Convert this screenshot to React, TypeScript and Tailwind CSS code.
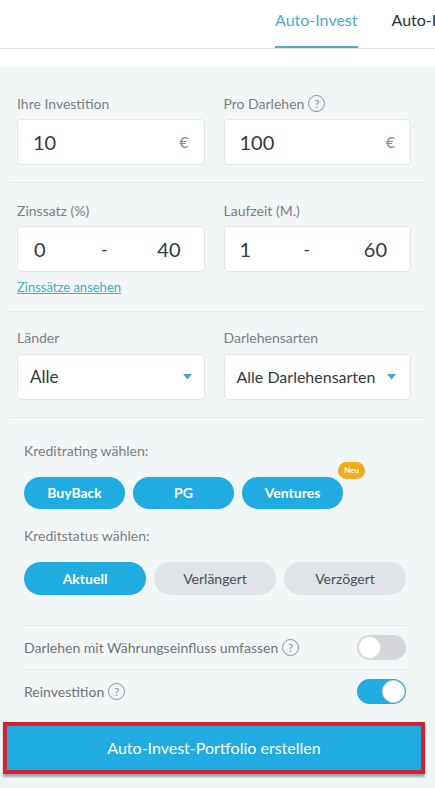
import React from "react";

const font = { fontFamily: "Lato, 'Open Sans', sans-serif" };

const Help = () => (
  <span className="ml-1 inline-flex h-[17px] w-[17px] items-center justify-center rounded-full border border-[#8a8f94] text-[11px] leading-none text-[#8a8f94]">
    ?
  </span>
);

const Caret = () => (
  <svg width="9" height="6" viewBox="0 0 9 6" className="shrink-0">
    <path d="M0 0 H9 L4.5 5.5 Z" fill="#3fa9c6" />
  </svg>
);

const Toggle = ({ on }: { on: boolean }) => (
  <div
    className={`flex h-[25px] w-[49px] items-center rounded-full p-[1px] ${
      on ? "justify-end bg-[#20ace0]" : "justify-start bg-[#d3d5d8]"
    }`}
  >
    <div className="h-[23px] w-[23px] rounded-full border border-[#d8dde0] bg-white" />
  </div>
);

const Box = ({ children }: { children: React.ReactNode }) => (
  <div className="flex h-[46px] items-center rounded-[4px] border border-[#e3e7ea] bg-white px-[15px] text-[20px] text-[#333a40]">
    {children}
  </div>
);

const Label = ({ children }: { children: React.ReactNode }) => (
  <div className="mb-[8px] flex h-[16px] items-center text-[14px] text-[#7a7f85]">{children}</div>
);

const App = () => {
  return (
    <div className="h-[788px] w-[435px] overflow-hidden bg-[#f3f6f7]" style={font}>
      <div className="h-[66px] overflow-hidden bg-white">
        <div className="flex h-[49px] items-end gap-[34px] border-b border-[#e3e6e9] pl-[275px]">
          <div className="flex h-full shrink-0 flex-col justify-end">
            <span className="whitespace-nowrap text-[16px] text-[#47afc8]">Auto-Invest</span>
            <div className="mt-[14px] h-[2px] bg-[#47afc8]" />
          </div>
          <div className="flex h-full shrink-0 flex-col justify-end">
            <span className="whitespace-nowrap text-[16px] text-[#2d3135]">Auto-Invest</span>
            <div className="mt-[14px] h-[2px]" />
          </div>
        </div>
      </div>

      <div className="mx-[10px] border-b border-[#e3e7ea] pb-[17px] pl-[7px] pr-[14px] pt-[29px]">
        <div className="grid grid-cols-2 gap-[19px]">
          <div>
            <Label>Ihre Investition</Label>
            <Box>
              <span className="flex-1">10</span>
              <span className="text-[16px] text-[#8a8f94]">€</span>
            </Box>
          </div>
          <div>
            <Label>
              Pro Darlehen
              <Help />
            </Label>
            <Box>
              <span className="flex-1">100</span>
              <span className="text-[16px] text-[#8a8f94]">€</span>
            </Box>
          </div>
        </div>
      </div>

      <div className="mx-[10px] border-b border-[#e3e7ea] pb-[13px] pl-[7px] pr-[14px] pt-[19px]">
        <div className="grid grid-cols-2 gap-[19px]">
          <div>
            <Label>Zinssatz (%)</Label>
            <Box>
              <span className="w-[68px] pl-[1px]">0</span>
              <span className="flex-1 text-[18px]">-</span>
              <span className="pr-[8px]">40</span>
            </Box>
          </div>
          <div>
            <Label>Laufzeit (M.)</Label>
            <Box>
              <span className="w-[64px]">1</span>
              <span className="flex-1 text-[18px]">-</span>
              <span className="pr-[8px]">60</span>
            </Box>
          </div>
        </div>
        <div className="mt-[6px] text-[13px] text-[#3fb0c9] underline">Zinssätze ansehen</div>
      </div>

      <div className="mx-[10px] border-b border-[#e3e7ea] pb-[17px] pl-[7px] pr-[14px] pt-[18px]">
        <div className="grid grid-cols-2 gap-[19px]">
          <div>
            <Label>Länder</Label>
            <div className="flex h-[46px] items-center rounded-[4px] border border-[#e3e7ea] bg-white pl-[12px] pr-[12px] text-[17px] text-[#333a40]">
              <span className="flex-1">Alle</span>
              <Caret />
            </div>
          </div>
          <div>
            <Label>Darlehensarten</Label>
            <div className="flex h-[46px] items-center rounded-[4px] border border-[#e3e7ea] bg-white pl-[12px] pr-[14px] text-[16px] text-[#333a40]">
              <span className="flex-1 whitespace-nowrap">Alle Darlehensarten</span>
              <Caret />
            </div>
          </div>
        </div>
      </div>

      <div className="pl-[24px] pr-[29px] pt-[22px]">
        <div className="text-[14px] text-[#7a7f85]">Kreditrating wählen:</div>
        <div className="mt-[16px] flex gap-[8px]">
          {["BuyBack", "PG"].map((t) => (
            <div
              key={t}
              className="flex h-[32px] w-[101px] items-center justify-center rounded-full bg-[#20ace0] text-[14px] font-bold text-white"
            >
              {t}
            </div>
          ))}
          <div className="relative flex h-[32px] w-[101px] items-center justify-center rounded-full bg-[#20ace0] text-[14px] font-bold text-white">
            Ventures
            <span className="absolute -right-[22px] -top-[15px] rounded-full bg-[#f3ad1b] px-[6px] py-[2px] text-[8px] font-bold leading-[13px] text-white">
              Neu
            </span>
          </div>
        </div>

        <div className="mt-[16px] text-[14px] text-[#7a7f85]">Kreditstatus wählen:</div>
        <div className="mt-[16px] flex gap-[8px]">
          <div className="flex h-[33px] w-[122px] items-center justify-center rounded-full bg-[#20ace0] text-[14px] font-bold text-white">
            Aktuell
          </div>
          <div className="flex h-[33px] w-[122px] items-center justify-center rounded-full bg-[#e0e4e8] text-[14px] text-[#4a4f55]">
            Verlängert
          </div>
          <div className="flex h-[33px] w-[122px] items-center justify-center rounded-full bg-[#e0e4e8] text-[14px] text-[#4a4f55]">
            Verzögert
          </div>
        </div>

        <div className="mt-[30px] border-t border-[#e3e7ea]">
          <div className="flex h-[44px] items-center border-b border-[#e3e7ea] text-[14px] text-[#6f747a]">
            <span className="flex flex-1 items-center">
              Darlehen mit Währungseinfluss umfassen
              <Help />
            </span>
            <Toggle on={false} />
          </div>
          <div className="flex h-[44px] items-center text-[14px] text-[#6f747a]">
            <span className="flex flex-1 items-center">
              Reinvestition
              <Help />
            </span>
            <Toggle on={true} />
          </div>
        </div>
      </div>

      <div className="mt-[8px] pl-[3px] pr-[10px]">
        <div className="flex h-[52px] items-center justify-center border-[4px] border-[#d8202f] bg-[#20ace0] text-[16px] text-white shadow-[0_3px_2px_rgba(40,70,90,0.45)]">
          Auto-Invest-Portfolio erstellen
        </div>
      </div>
    </div>
  );
};

export default App;
